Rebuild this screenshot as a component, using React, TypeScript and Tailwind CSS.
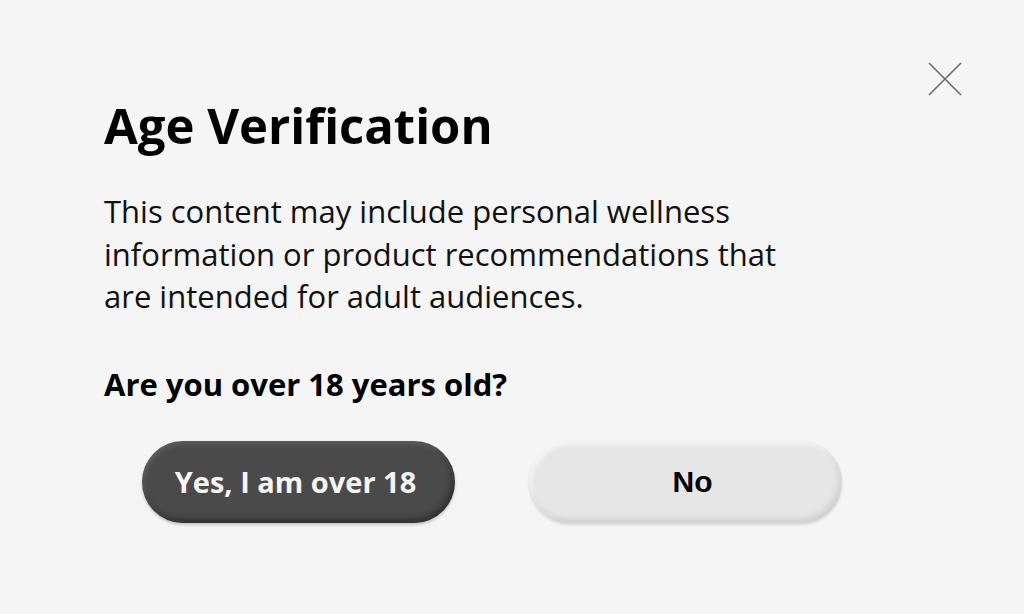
export default function App() {
  return (
    <div
      className="relative w-[1024px] h-[614px] bg-[#f5f5f5] text-black overflow-hidden"
      style={{ fontFamily: '"Open Sans", "Noto Sans", sans-serif' }}
    >
      <button className="absolute left-[928px] top-[62px] w-[34px] h-[34px]" aria-label="Close">
        <svg viewBox="0 0 34 34" width="34" height="34" fill="none" stroke="#6b6b6b" strokeWidth="1.6">
          <path d="M1 1 L33 33 M33 1 L1 33" />
        </svg>
      </button>

      <div className="pl-[104px] pt-[95px]">
        <h1 className="text-[49px] font-bold leading-[60px]">Age Verification</h1>
        <p className="mt-[35px] text-[31px] leading-[42.5px] w-[700px] text-[#111]">
          This content may include personal wellness information or product recommendations that are intended for adult audiences.
        </p>
        <p className="mt-[46px] text-[31px] font-bold leading-[40px]">Are you over 18 years old?</p>

        <div className="mt-[37px] ml-[38px] flex gap-[74px]">
          <button className="w-[313px] h-[82px] pr-[6px] rounded-full bg-[#4a4a4a] text-[#f5f5f5] text-[29px] font-bold shadow-[inset_-3px_-4px_6px_rgba(0,0,0,0.35),inset_2px_3px_5px_rgba(255,255,255,0.12),0_2px_3px_rgba(0,0,0,0.2)]">
            Yes, I am over 18
          </button>
          <button
            className="w-[313px] h-[82px] pl-[14px] rounded-full bg-[#e6e6e6] text-black text-[30px] font-bold shadow-[inset_-3px_-4px_6px_rgba(0,0,0,0.1),inset_2px_3px_5px_rgba(255,255,255,0.7),0_2px_3px_rgba(0,0,0,0.12)]"
            style={{ fontFamily: '"Liberation Sans", Arial, sans-serif' }}
          >
            No
          </button>
        </div>
      </div>
    </div>
  );
}
